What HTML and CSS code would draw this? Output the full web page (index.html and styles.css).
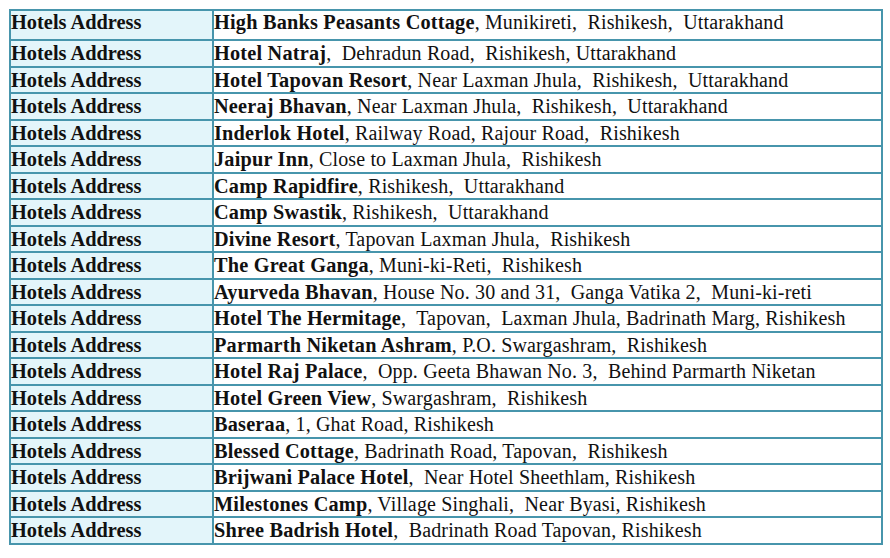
FILE: index.html
```html
<!DOCTYPE html>
<html>
<head>
<meta charset="utf-8">
<link rel="stylesheet" href="styles.css">
</head>
<body>
<table class="hotels">
<tr class="first"><td class="label">Hotels Address</td><td class="addr"><b>High Banks Peasants Cottage</b>, Munikireti,&nbsp; Rishikesh,&nbsp; Uttarakhand</td></tr>
<tr><td class="label">Hotels Address</td><td class="addr"><b>Hotel Natraj</b>,&nbsp; Dehradun Road,&nbsp; Rishikesh, Uttarakhand</td></tr>
<tr><td class="label">Hotels Address</td><td class="addr"><b>Hotel Tapovan Resort</b>, Near Laxman Jhula,&nbsp; Rishikesh,&nbsp; Uttarakhand</td></tr>
<tr><td class="label">Hotels Address</td><td class="addr"><b>Neeraj Bhavan</b>, Near Laxman Jhula,&nbsp; Rishikesh,&nbsp; Uttarakhand</td></tr>
<tr><td class="label">Hotels Address</td><td class="addr"><b>Inderlok Hotel</b>, Railway Road, Rajour Road,&nbsp; Rishikesh</td></tr>
<tr><td class="label">Hotels Address</td><td class="addr"><b>Jaipur Inn</b>, Close to Laxman Jhula,&nbsp; Rishikesh</td></tr>
<tr><td class="label">Hotels Address</td><td class="addr"><b>Camp Rapidfire</b>, Rishikesh,&nbsp; Uttarakhand</td></tr>
<tr><td class="label">Hotels Address</td><td class="addr"><b>Camp Swastik</b>, Rishikesh,&nbsp; Uttarakhand</td></tr>
<tr><td class="label">Hotels Address</td><td class="addr"><b>Divine Resort</b>, Tapovan Laxman Jhula,&nbsp; Rishikesh</td></tr>
<tr><td class="label">Hotels Address</td><td class="addr"><b>The Great Ganga</b>, Muni-ki-Reti,&nbsp; Rishikesh</td></tr>
<tr><td class="label">Hotels Address</td><td class="addr"><b>Ayurveda Bhavan</b>, House No. 30 and 31,&nbsp; Ganga Vatika 2,&nbsp; Muni-ki-reti</td></tr>
<tr><td class="label">Hotels Address</td><td class="addr"><b>Hotel The Hermitage</b>,&nbsp; Tapovan,&nbsp; Laxman Jhula, Badrinath Marg, Rishikesh</td></tr>
<tr><td class="label">Hotels Address</td><td class="addr"><b>Parmarth Niketan Ashram</b>, P.O. Swargashram,&nbsp; Rishikesh</td></tr>
<tr><td class="label">Hotels Address</td><td class="addr"><b>Hotel Raj Palace</b>,&nbsp; Opp. Geeta Bhawan No. 3,&nbsp; Behind Parmarth Niketan</td></tr>
<tr><td class="label">Hotels Address</td><td class="addr"><b>Hotel Green View</b>, Swargashram,&nbsp; Rishikesh</td></tr>
<tr><td class="label">Hotels Address</td><td class="addr"><b>Baseraa</b>, 1, Ghat Road, Rishikesh</td></tr>
<tr><td class="label">Hotels Address</td><td class="addr"><b>Blessed Cottage</b>, Badrinath Road, Tapovan,&nbsp; Rishikesh</td></tr>
<tr><td class="label">Hotels Address</td><td class="addr"><b>Brijwani Palace Hotel</b>,&nbsp; Near Hotel Sheethlam, Rishikesh</td></tr>
<tr><td class="label">Hotels Address</td><td class="addr"><b>Milestones Camp</b>, Village Singhali,&nbsp; Near Byasi, Rishikesh</td></tr>
<tr><td class="label">Hotels Address</td><td class="addr"><b>Shree Badrish Hotel</b>,&nbsp; Badrinath Road Tapovan, Rishikesh</td></tr>
</table>
</body>
</html>
```

FILE: styles.css
```css
html, body {
  margin: 0;
  padding: 0;
  background: #ffffff;
}

.hotels {
  margin: 9px 0 0 9px;
  width: 874px;
  border-collapse: collapse;
  font-family: "Liberation Serif", "Times New Roman", serif;
  font-size: 20px;
  line-height: 24px;
  color: #111111;
}

.hotels td {
  border: 2px solid #4795ac;
  padding: 0 1px 0 0;
  height: 24.5px;
  vertical-align: middle;
  white-space: nowrap;
}

.hotels .first td {
  height: 28px;
  line-height: 22px;
  vertical-align: top;
  padding-top: 0;
}

.hotels .label {
  width: 200px;
  background: #e3f5fa;
  font-weight: bold;
  font-size: 20.4px;
}

.hotels .addr {
  background: #ffffff;
  letter-spacing: 0.15px;
}

.hotels .addr b {
  font-size: 20.3px;
  letter-spacing: 0.2px;
}
```
